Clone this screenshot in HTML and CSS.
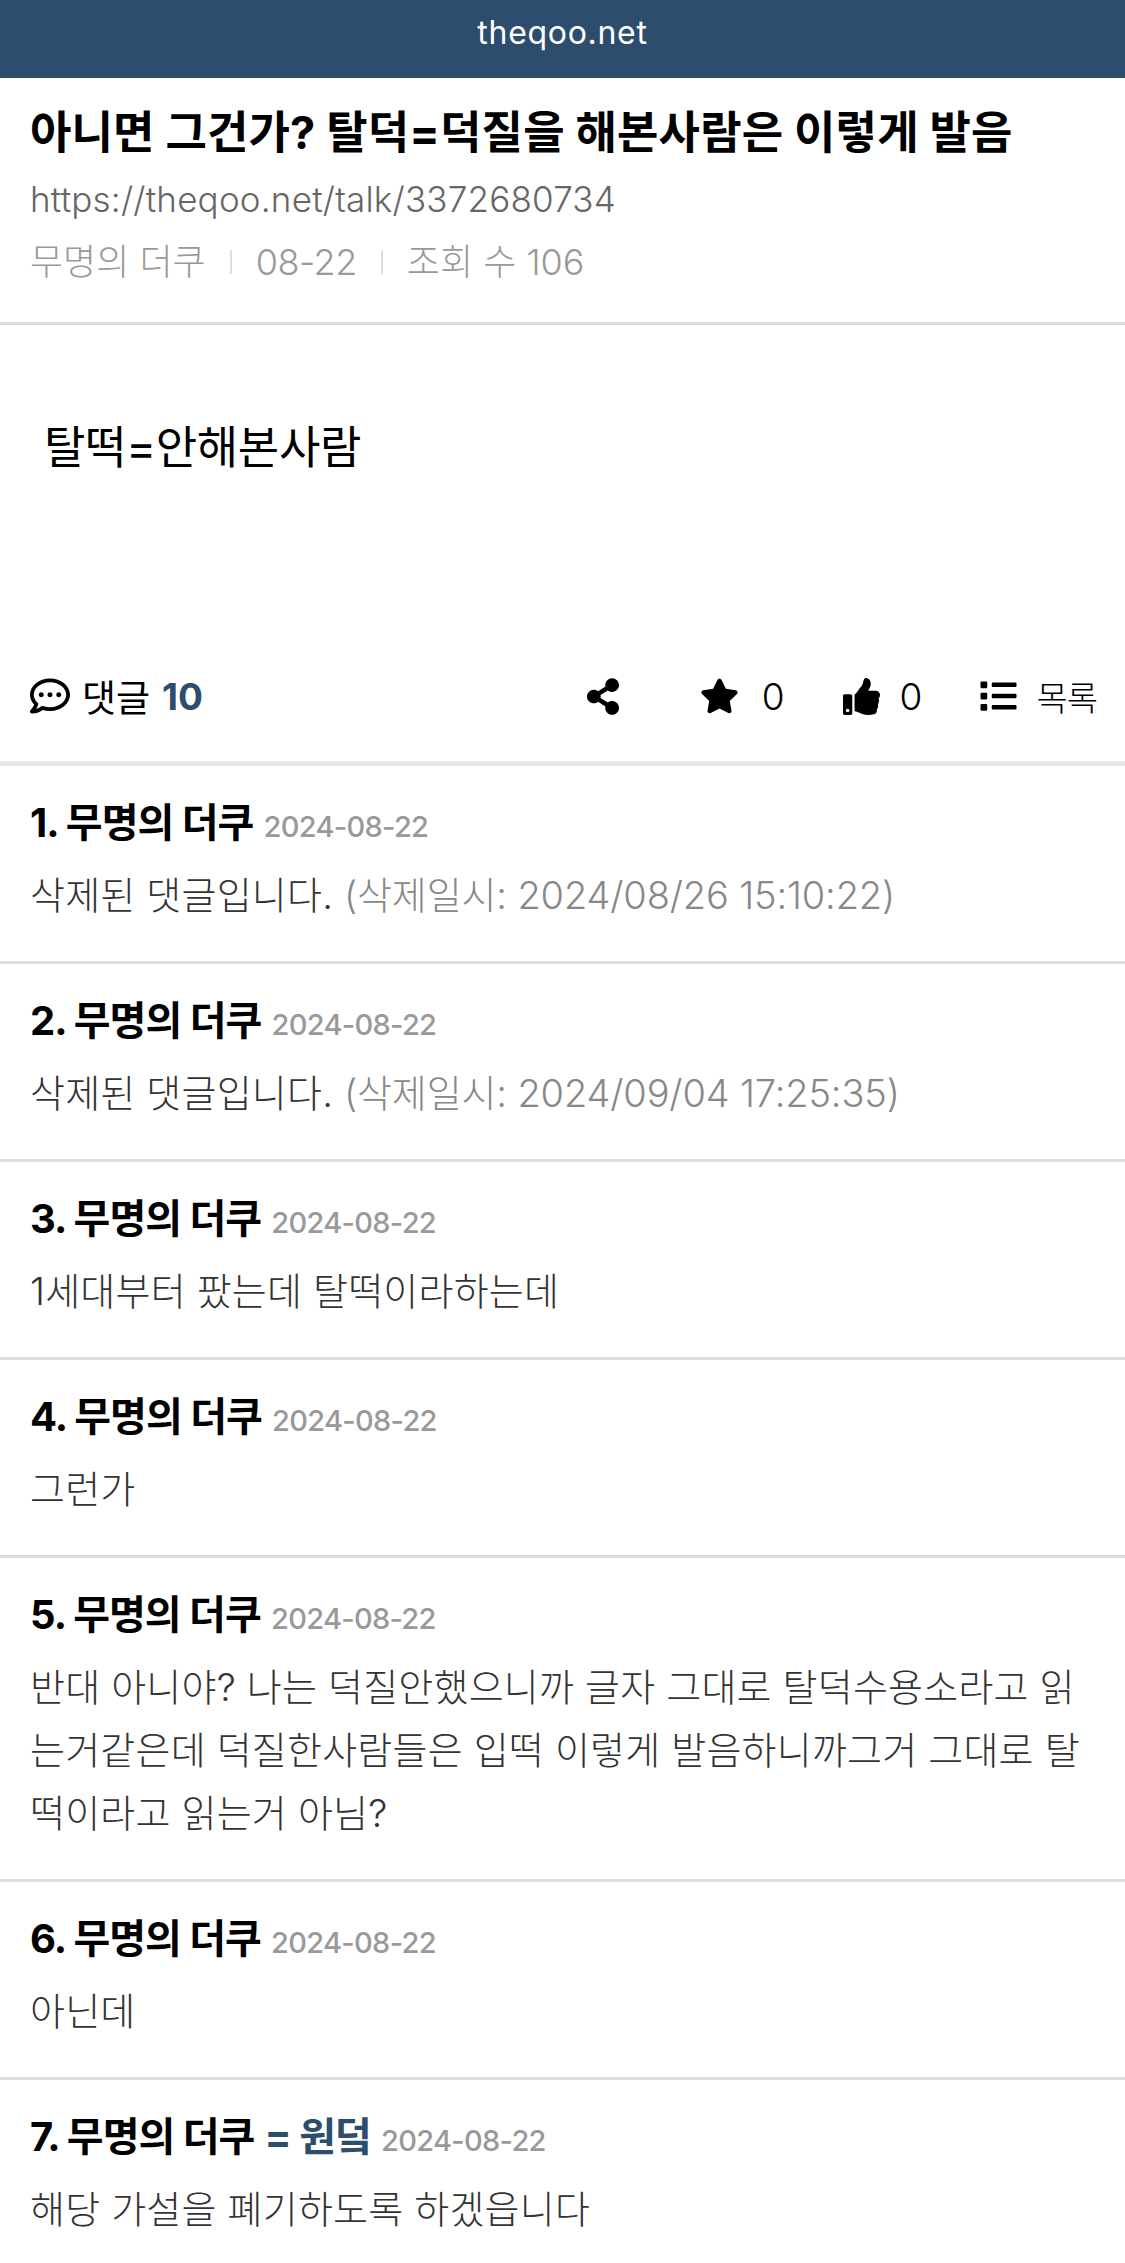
FILE: index.html
```html
<!DOCTYPE html>
<html lang="ko">

<head>
    <meta charset="UTF-8">
    <title>theqoo.net</title>
    <link rel="stylesheet" href="styles.css">
</head>

<body>
    <header class="topbar">theqoo.net</header>

    <section class="post-head">
        <h1>아니면 그건가? 탈덕=덕질을 해본사람은 이렇게 발음</h1>
        <div class="post-url">https://theqoo.net/talk/3372680734</div>
        <div class="post-meta">
            <span>무명의 더쿠</span>
            <i class="sep"></i>
            <span class="meta-date">08-22</span>
            <i class="sep"></i>
            <span>조회 수 106</span>
        </div>
    </section>

    <section class="post-body">탈떡=안해본사람</section>

    <div class="toolbar">
        <div class="reply-count">
            <svg class="ico ico-comment" viewBox="0 0 512 512"><path d="M144 208c-17.7 0-32 14.3-32 32s14.3 32 32 32 32-14.3 32-32-14.3-32-32-32zm112 0c-17.7 0-32 14.3-32 32s14.3 32 32 32 32-14.3 32-32-14.3-32-32-32zm112 0c-17.7 0-32 14.3-32 32s14.3 32 32 32 32-14.3 32-32-14.3-32-32-32zM256 32C114.6 32 0 125.1 0 240c0 47.6 19.9 91.2 52.9 126.3C38 405.7 7 439.1 6.5 439.5c-6.6 7-8.4 17.2-4.6 26S14.4 480 24 480c61.5 0 110-25.7 139.1-46.3C192 442.8 223.2 448 256 448c141.4 0 256-93.1 256-208S397.4 32 256 32zm0 368c-26.7 0-53.1-4.1-78.4-12.1l-22.7-7.2-19.5 13.8c-14.3 10.1-33.9 21.4-57.5 29 7.3-12.1 14.4-25.7 19.9-40.2l10.6-28.1-20.6-21.8C69.7 314.1 48 282.2 48 240c0-88.2 93.3-160 208-160s208 71.8 208 160-93.3 160-208 160z"/></svg>
            <span>댓글</span>
            <b>10</b>
        </div>
        <div class="actions">
            <svg class="ico ico-share" viewBox="0 0 448 512"><path d="M352 320c-22.608 0-43.387 7.819-59.79 20.895l-102.486-64.054a96.551 96.551 0 0 0 0-41.683l102.486-64.054C308.613 184.181 329.392 192 352 192c53.019 0 96-42.981 96-96S405.019 0 352 0s-96 42.981-96 96c0 7.158.79 14.13 2.276 20.841L155.79 180.895C139.387 167.819 118.608 160 96 160c-53.019 0-96 42.981-96 96s42.981 96 96 96c22.608 0 43.387-7.819 59.79-20.895l102.486 64.054A96.301 96.301 0 0 0 256 416c0 53.019 42.981 96 96 96s96-42.981 96-96-42.981-96-96-96z"/></svg>
            <div class="action action-star">
                <svg class="ico ico-star" viewBox="0 0 576 512"><path d="M259.3 17.8L194 150.2 47.9 171.5c-26.2 3.8-36.7 36.1-17.7 54.6l105.7 103-25 145.5c-4.5 26.3 23.2 46 46.4 33.7L288 439.6l130.7 68.7c23.2 12.2 50.9-7.4 46.4-33.7l-25-145.5 105.7-103c19-18.5 8.5-50.8-17.7-54.6L382 150.2 316.7 17.8c-11.7-23.6-45.6-23.9-57.4 0z"/></svg>
                <span>0</span>
            </div>
            <div class="action action-like">
                <svg class="ico ico-like" viewBox="0 0 512 512"><path d="M104 224H24c-13.255 0-24 10.745-24 24v240c0 13.255 10.745 24 24 24h80c13.255 0 24-10.745 24-24V248c0-13.255-10.745-24-24-24zM64 472c-13.255 0-24-10.745-24-24s10.745-24 24-24 24 10.745 24 24-10.745 24-24 24zM384 81.452c0 42.416-25.97 66.208-33.277 94.548h101.723c33.397 0 59.397 27.746 59.553 58.098.084 17.938-7.546 37.249-19.439 49.197l-.11.11c9.836 23.337 8.237 56.037-9.308 79.469 8.681 25.895-.069 57.704-16.382 74.757 4.298 17.598 2.244 32.575-6.148 44.632C440.202 511.587 389.616 512 346.839 512l-2.845-.001c-48.287-.017-87.806-17.598-119.56-31.725-15.957-7.099-36.821-15.887-52.651-16.178-6.54-.12-11.783-5.457-11.783-11.998v-213.77c0-3.2 1.282-6.271 3.558-8.521 39.614-39.144 56.648-80.587 89.117-113.111 14.804-14.832 20.188-37.236 25.393-58.902C282.515 39.293 291.817 0 312 0c24 0 72 8 72 81.452z"/></svg>
                <span>0</span>
            </div>
            <div class="action action-list">
                <svg class="ico ico-list" viewBox="0 0 512 512"><path d="M80 368H16a16 16 0 0 0-16 16v64a16 16 0 0 0 16 16h64a16 16 0 0 0 16-16v-64a16 16 0 0 0-16-16zm0-320H16A16 16 0 0 0 0 64v64a16 16 0 0 0 16 16h64a16 16 0 0 0 16-16V64a16 16 0 0 0-16-16zm0 160H16a16 16 0 0 0-16 16v64a16 16 0 0 0 16 16h64a16 16 0 0 0 16-16v-64a16 16 0 0 0-16-16zm416 176H176a16 16 0 0 0-16 16v32a16 16 0 0 0 16 16h320a16 16 0 0 0 16-16v-32a16 16 0 0 0-16-16zm0-320H176a16 16 0 0 0-16 16v32a16 16 0 0 0 16 16h320a16 16 0 0 0 16-16V80a16 16 0 0 0-16-16zm0 160H176a16 16 0 0 0-16 16v32a16 16 0 0 0 16 16h320a16 16 0 0 0 16-16v-32a16 16 0 0 0-16-16z"/></svg>
                <span>목록</span>
            </div>
        </div>
    </div>

    <ul class="comments">
        <li class="comment">
            <div class="comment-head"><b>1. 무명의 더쿠</b> <time>2024-08-22</time></div>
            <p>삭제된 댓글입니다. <span class="deleted">(삭제일시: 2024/08/26 15:10:22)</span></p>
        </li>
        <li class="comment">
            <div class="comment-head"><b>2. 무명의 더쿠</b> <time>2024-08-22</time></div>
            <p>삭제된 댓글입니다. <span class="deleted">(삭제일시: 2024/09/04 17:25:35)</span></p>
        </li>
        <li class="comment">
            <div class="comment-head"><b>3. 무명의 더쿠</b> <time>2024-08-22</time></div>
            <p>1세대부터 팠는데 탈떡이라하는데</p>
        </li>
        <li class="comment">
            <div class="comment-head"><b>4. 무명의 더쿠</b> <time>2024-08-22</time></div>
            <p>그런가</p>
        </li>
        <li class="comment">
            <div class="comment-head"><b>5. 무명의 더쿠</b> <time>2024-08-22</time></div>
            <p>반대 아니야? 나는 덕질안했으니까 글자 그대로 탈덕수용소라고 읽는거같은데 덕질한사람들은 입떡 이렇게 발음하니까그거 그대로 탈떡이라고 읽는거 아님?</p>
        </li>
        <li class="comment">
            <div class="comment-head"><b>6. 무명의 더쿠</b> <time>2024-08-22</time></div>
            <p>아닌데</p>
        </li>
        <li class="comment">
            <div class="comment-head"><b>7. 무명의 더쿠</b> <b class="op">= 원덬</b> <time>2024-08-22</time></div>
            <p>해당 가설을 폐기하도록 하겠읍니다</p>
        </li>
    </ul>
</body>

</html>
```

FILE: styles.css
```css
* {
    margin: 0;
    padding: 0;
    box-sizing: border-box;
    font-family: "Inter", "Noto Sans CJK KR", "Noto Sans", sans-serif;
}

body {
    background-color: #fff;
    color: #000;
    overflow: hidden;
}

.topbar {
    height: 78px;
    line-height: 66px;
    background-color: #2c4d6e;
    color: #fff;
    font-size: 32px;
    letter-spacing: .7px;
    text-align: center;
}

.post-head {
    height: 247px;
    padding: 24px 30px 0;
    border-bottom: 3px solid #ddd;
}
.post-head h1 {
    font-size: 45px;
    line-height: 62px;
    font-weight: 700;
    letter-spacing: .15px;
    white-space: nowrap;
}
.post-url {
    margin-top: 8px;
    font-size: 35px;
    line-height: 54px;
    font-weight: 300;
    letter-spacing: .2px;
    color: #666;
}
.post-meta {
    display: flex;
    align-items: center;
    margin-top: 9px;
    font-size: 36px;
    line-height: 54px;
    font-weight: 300;
    color: #999;
}
.meta-date {
    letter-spacing: -.5px;
}
.sep {
    width: 2px;
    height: 24px;
    margin: 0 24px;
    background-color: #ddd;
}

.post-body {
    height: 310px;
    padding: 93px 44px 0;
    font-size: 45px;
    line-height: 60px;
    letter-spacing: -.3px;
}

.toolbar {
    display: flex;
    justify-content: space-between;
    align-items: center;
    height: 131px;
    padding: 0 28px 4px 30px;
    border-bottom: 5px solid #e8e8e8;
    font-size: 37px;
}
.ico {
    display: block;
    fill: #000;
}
.reply-count {
    display: flex;
    align-items: center;
    gap: 12px;
}
.reply-count b {
    color: #2c4d6e;
    font-weight: 700;
}
.ico-comment {
    width: 40px;
    height: 40px;
}
.actions {
    display: flex;
    align-items: center;
}
.action {
    display: flex;
    align-items: center;
    font-weight: 300;
}
.ico-share {
    width: 32px;
    height: 37px;
    margin-right: 81px;
}
.action-star {
    gap: 23px;
    margin-right: 58px;
}
.ico-star {
    width: 39px;
    height: 36px;
}
.action-like {
    gap: 20px;
    margin-right: 58px;
}
.ico-like {
    width: 37px;
    height: 37px;
}
.action-list {
    gap: 19px;
    font-size: 34px;
    letter-spacing: -1px;
}
.ico-list {
    width: 37px;
    height: 36px;
}

.comments {
    list-style: none;
}
.comment {
    padding: 29px 30px 34px;
    border-bottom: 3px solid #ddd;
}
.comment:last-child {
    border-bottom: none;
}
.comment-head {
    height: 56px;
    font-size: 40px;
    line-height: 56px;
    letter-spacing: -1px;
}
.comment-head b {
    font-weight: 700;
}
.comment-head .op {
    color: #2c4d6e;
}
.comment-head time {
    font-size: 29px;
    font-weight: 500;
    letter-spacing: -.7px;
    color: #999;
}
.comment p {
    margin-top: 13px;
    font-size: 38px;
    line-height: 63px;
    font-weight: 300;
    letter-spacing: .2px;
    color: #333;
    word-break: break-all;
}
.deleted {
    letter-spacing: -.15px;
    color: #888;
}
```
